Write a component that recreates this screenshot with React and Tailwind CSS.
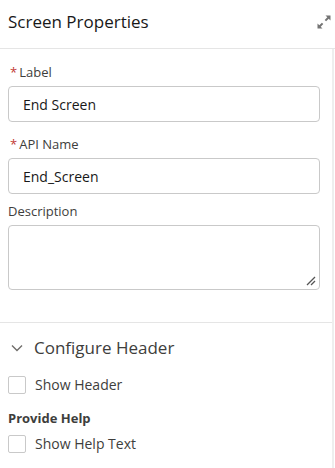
import React from "react";

const font = { fontFamily: '"Open Sans", "Noto Sans", sans-serif' };

const Label = ({ children, required }) => (
  <div className="flex items-center h-[22px] text-[13px] text-[#3e3e3c]">
    {required && <span className="text-[#c23934] mr-[2px] ml-[2px]">*</span>}
    <span>{children}</span>
  </div>
);

const Input = ({ value }) => (
  <div className="mt-[2px] h-[36px] rounded-[4px] border border-[#c9c9c9] flex items-center px-[14px] text-[14px] text-[#181818]">
    {value}
  </div>
);

const Checkbox = ({ label }) => (
  <div className="flex items-center h-[19px]">
    <div className="w-[18px] h-[18px] rounded-[2px] border border-[#c9c9c9] bg-white" />
    <span className="ml-[9px] text-[14px] text-[#3e3e3c]">{label}</span>
  </div>
);

export default function App() {
  return (
    <div className="w-[335px] h-[468px] bg-white overflow-hidden" style={font}>
      {/* header */}
      <div className="h-[49px] border-b border-[#e5e5e5] flex items-center justify-between pl-[8px] pr-[3px]">
        <h1 className="text-[17px] text-[#181818] -mt-[4px]">Screen Properties</h1>
        <svg width="16" height="16" viewBox="0 0 16 16" className="-mt-[4px]" fill="#747474">
          <path d="M9.5 1.5h5v5l-1.8-1.8-2.6 2.6-1.4-1.4 2.6-2.6z" />
          <path d="M6.5 14.5h-5v-5l1.8 1.8 2.6-2.6 1.4 1.4-2.6 2.6z" />
        </svg>
      </div>

      {/* body */}
      <div className="mr-px border-r-2 border-[#eeeeee] h-[419px]">
        <div className="pl-[8px] pr-[12px] pt-[13px]">
          <Label required>Label</Label>
          <Input value="End Screen" />
          <div className="mt-[12px]">
            <Label required>API Name</Label>
            <Input value="End_Screen" />
          </div>
          <div className="mt-[7px]">
            <Label>Description</Label>
            <div className="relative mt-[2px] h-[65px] rounded-[4px] border border-[#c9c9c9]">
              <svg width="10" height="10" viewBox="0 0 10 10" className="absolute right-[3px] bottom-[3px]" stroke="#555" strokeWidth="1.2">
                <line x1="1" y1="9" x2="9" y2="1" />
                <line x1="5" y1="9" x2="9" y2="5" />
              </svg>
            </div>
          </div>
        </div>

        <div className="mt-[32px] border-t border-[#e5e5e5]" />

        <div className="px-[8px] pt-[13px]">
          <div className="flex items-center h-[24px]">
            <svg width="14" height="14" viewBox="0 0 14 14" className="ml-[2px]" fill="none" stroke="#706e6b" strokeWidth="1.4">
              <path d="M2 4.5l5 5 5-5" />
            </svg>
            <span className="ml-[10px] text-[17px] text-[#3e3e3c]">Configure Header</span>
          </div>
          <div className="mt-[15px]">
            <Checkbox label="Show Header" />
          </div>
          <div className="mt-[15px] text-[13px] font-bold text-[#3e3e3c] h-[20px] flex items-center">Provide Help</div>
          <div className="mt-[5px]">
            <Checkbox label="Show Help Text" />
          </div>
        </div>
      </div>
    </div>
  );
}
